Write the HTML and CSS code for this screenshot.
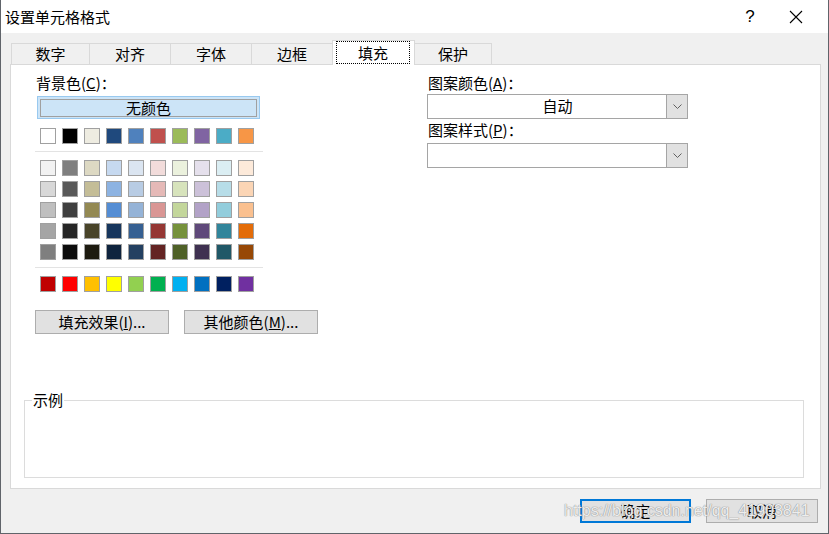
FILE: index.html
```html
<!DOCTYPE html>
<html lang="zh-CN">

<head>
    <meta charset="UTF-8">
    <title>设置单元格格式</title>
    <link rel="stylesheet" href="styles.css">
</head>

<body>
    <div class="window">
        <div class="titlebar">
            <span class="title">设置单元格格式</span>
            <span class="help">?</span>
            <span class="close">
                <svg width="14" height="14" viewBox="0 0 14 14">
                    <path d="M1 1 L13 13 M13 1 L1 13" stroke="#000" stroke-width="1.1" fill="none" />
                </svg>
            </span>
        </div>
        <div class="body">
            <div class="tabs">
                <div class="tab">数字</div>
                <div class="tab">对齐</div>
                <div class="tab">字体</div>
                <div class="tab">边框</div>
                <div class="tab active"><span class="focus">填充</span></div>
                <div class="tab">保护</div>
            </div>
            <div class="panel">
                <div class="columns">
                    <div class="left-col">
                        <div class="label">背景色(<u>C</u>)：</div>
                        <div class="no-color"><span>无颜色</span></div>
                        <div class="swatches" id="theme"></div>
                        <div class="sep"></div>
                        <div class="swatches tints" id="tints"></div>
                        <div class="sep"></div>
                        <div class="swatches" id="standard"></div>
                        <div class="btn-row">
                            <button class="btn">填充效果(<u>I</u>)...</button>
                            <button class="btn">其他颜色(<u>M</u>)...</button>
                        </div>
                    </div>
                    <div class="right-col">
                        <div class="label">图案颜色(<u>A</u>)：</div>
                        <div class="combo">
                            <span class="combo-text">自动</span>
                            <span class="combo-arrow">
                                <svg width="9" height="5" viewBox="0 0 9 5">
                                    <path d="M0.5 0.5 L4.5 4.5 L8.5 0.5" stroke="#606060" fill="none" />
                                </svg>
                            </span>
                        </div>
                        <div class="label second">图案样式(<u>P</u>)：</div>
                        <div class="combo">
                            <span class="combo-text"></span>
                            <span class="combo-arrow">
                                <svg width="9" height="5" viewBox="0 0 9 5">
                                    <path d="M0.5 0.5 L4.5 4.5 L8.5 0.5" stroke="#606060" fill="none" />
                                </svg>
                            </span>
                        </div>
                    </div>
                </div>
                <fieldset class="sample">
                    <legend>示例</legend>
                </fieldset>
            </div>
            <div class="footer">
                <button class="btn dlg default">确定</button>
                <button class="btn dlg">取消</button>
            </div>
        </div>
        <div class="watermark">https://blog.csdn.net/qq_41903841</div>
    </div>
    <script>
        const theme = ['#ffffff', '#000000', '#eeece1', '#1f497d', '#4f81bd', '#c0504d', '#9bbb59', '#8064a2', '#4bacc6', '#f79646']
        const tints = [
            '#f2f2f2', '#7f7f7f', '#ddd9c3', '#c6d9f0', '#dbe5f1', '#f2dcdb', '#ebf1dd', '#e5e0ec', '#dbeef3', '#fdeada',
            '#d8d8d8', '#595959', '#c4bd97', '#8db3e2', '#b8cce4', '#e5b9b7', '#d7e3bc', '#ccc1d9', '#b7dde8', '#fbd5b5',
            '#bfbfbf', '#3f3f3f', '#938953', '#548dd4', '#95b3d7', '#d99694', '#c3d69b', '#b2a2c7', '#92cddc', '#fac08f',
            '#a5a5a5', '#262626', '#494429', '#17365d', '#366092', '#953734', '#76923c', '#5f497a', '#31859b', '#e36c09',
            '#7f7f7f', '#0c0c0c', '#1d1b10', '#0f243e', '#244061', '#632423', '#4f6128', '#3f3151', '#205867', '#974806'
        ]
        const standard = ['#c00000', '#ff0000', '#ffc000', '#ffff00', '#92d050', '#00b050', '#00b0f0', '#0070c0', '#002060', '#7030a0']

        const fill = (id, colors) => {
            const box = document.querySelector('#' + id)
            colors.forEach((c) => {
                const sw = document.createElement('div')
                sw.className = 'swatch'
                sw.style.backgroundColor = c
                box.appendChild(sw)
            })
        }
        fill('theme', theme)
        fill('tints', tints)
        fill('standard', standard)
    </script>
</body>

</html>
```

FILE: styles.css
```css
* {
    margin: 0;
    padding: 0;
    box-sizing: border-box;
}

body {
    font-family: "Noto Sans CJK SC", sans-serif;
    font-size: 15px;
    color: #000;
    background: #f0f0f0;
}

.window {
    position: relative;
    width: 829px;
    height: 534px;
    border: 1px solid #60646a;
    border-top: none;
    display: flex;
    flex-direction: column;
    overflow: hidden;
}

.titlebar {
    height: 33px;
    background: #fff;
    display: flex;
    align-items: center;
    padding-left: 4px;
}

.title {
    flex: 1;
    font-size: 15px;
}

.help {
    font-family: "Liberation Sans", sans-serif;
    font-size: 17px;
    width: 46px;
    text-align: center;
}

.close {
    width: 46px;
    margin-right: 9px;
    display: flex;
    justify-content: center;
    padding-top: 1px;
}

.body {
    flex: 1;
    display: flex;
    flex-direction: column;
    padding: 7px 7px 0 9px;
}

.tabs {
    display: flex;
    align-items: flex-end;
    height: 24px;
    padding-left: 1px;
}

.tab {
    width: 81px;
    height: 21px;
    border: 1px solid #d9d9d9;
    border-bottom: none;
    border-left: none;
    background: #f0f0f0;
    text-align: center;
    line-height: 20px;
}

.tab:first-child {
    border-left: 1px solid #d9d9d9;
    width: 79px;
}

.tab:last-child {
    width: 77px;
}

.tab.active {
    width: 83px;
    height: 25px;
    margin: 0 0 -1px -1px;
    border: 1px solid #d9d9d9;
    border-bottom: none;
    background: #fff;
    position: relative;
    z-index: 1;
    padding: 0 4px 1px 3px;
}

.focus {
    display: block;
    height: 23px;
    line-height: 21px;
    border: 1px dotted #000;
}

.panel {
    height: 425px;
    background: #fff;
    border: 1px solid #d9d9d9;
    display: flex;
    flex-direction: column;
    padding: 8px 0 0 24px;
}

.columns {
    display: flex;
}

.left-col {
    width: 228px;
}

.label {
    height: 20px;
    line-height: 20px;
    margin-left: 1px;
    margin-bottom: 3px;
}

.no-color {
    margin-left: 2px;
    width: 223px;
    height: 23px;
    border: 1px solid #99c9ef;
    background: #cce4f7;
    padding: 2px 2px 1px;
}

.no-color span {
    display: block;
    height: 100%;
    border: 1px solid #a0a0a0;
    text-align: center;
    line-height: 16px;
}

.swatches {
    display: grid;
    grid-template-columns: repeat(10, 16px);
    column-gap: 6px;
    row-gap: 5px;
    margin: 9px 0 0 5px;
}

.swatch {
    width: 16px;
    height: 16px;
    border: 1px solid #a0a0a0;
}

.sep {
    height: 1px;
    background: #e3e3e3;
    margin-top: 7px;
}

.sep + .swatches {
    margin-top: 8px;
}

.btn-row {
    display: flex;
    gap: 15px;
    margin-top: 18px;
    width: 300px;
}

.btn {
    font-family: "Noto Sans CJK SC", sans-serif;
    font-size: 15px;
    width: 134px;
    height: 24px;
    background: #e1e1e1;
    border: 1px solid #adadad;
    line-height: 20px;
}

.right-col {
    width: 261px;
    margin-left: 164px;
}

.right-col .label {
    margin-bottom: 1px;
}

.right-col .label.second {
    margin: 1px 0 3px 1px;
}

.combo {
    display: flex;
    height: 25px;
    border: 1px solid #a5a5a5;
    background: #fff;
}

.combo-text {
    flex: 1;
    text-align: center;
    line-height: 22px;
    padding-left: 21px;
}

.combo-arrow {
    width: 21px;
    background: #e1e1e1;
    border-left: 1px solid #a5a5a5;
    display: flex;
    align-items: center;
    justify-content: center;
}

.sample {
    margin: auto 0 10px -11px;
    width: 780px;
    height: 88px;
    border: 1px solid #dcdcdc;
    padding: 0;
}

.sample legend {
    margin-left: 7px;
    padding: 0 1px;
    line-height: 20px;
}

.footer {
    display: flex;
    justify-content: flex-end;
    gap: 15px;
    margin-top: 10px;
    padding-right: 3px;
}

.btn.dlg {
    width: 112px;
    height: 24px;
}

.btn.default {
    width: 111px;
    border: 2px solid #0078d7;
}

.watermark {
    position: absolute;
    left: 563px;
    top: 502px;
    font-family: "Liberation Sans", sans-serif;
    font-size: 16px;
    color: rgba(255, 255, 255, 0.85);
    text-shadow: 0 0 1px #8c8c8c, 0 0 1px #8c8c8c;
    pointer-events: none;
}
```
